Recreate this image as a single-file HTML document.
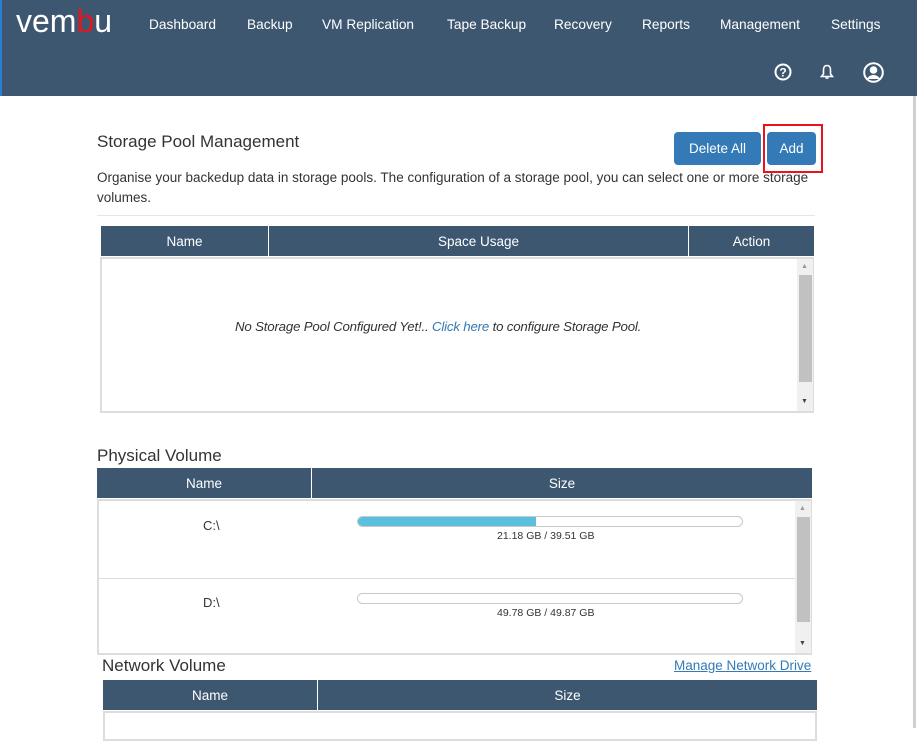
<!DOCTYPE html>
<html><head><meta charset="utf-8"><style>
*{box-sizing:border-box;margin:0;padding:0}
body{width:917px;height:728px;overflow:hidden;background:#fff;font-family:"Liberation Sans",sans-serif;color:#333;position:relative}
.abs{position:absolute}
.hdr{left:0;top:0;width:917px;height:96px;background:#3e5771;border-left:2px solid #2a7fd4}
.nav{color:#fff;font-size:13.7px;top:17px}
.th{background:#3e5771;color:#fff;font-size:13.5px;display:flex;align-items:center;justify-content:center;height:30px}
.sb{background:#f0f0f0}
.thumb{background:#c1c1c1}
.bar{height:11px;border:1px solid #c8c8c8;border-radius:6px;background:#fff;overflow:hidden}
.sm{font-size:10.5px;color:#333}
</style></head><body>
<div class="abs hdr"></div>
<div class="abs" style="left:16px;top:3px;font-size:32px;color:#fff;letter-spacing:0px;font-family:'Liberation Sans',sans-serif">vem<span style="color:#e8141b">b</span>u</div>
<div class="abs nav" style="left:149px">Dashboard</div>
<div class="abs nav" style="left:247px">Backup</div>
<div class="abs nav" style="left:322px">VM Replication</div>
<div class="abs nav" style="left:447px">Tape Backup</div>
<div class="abs nav" style="left:554px">Recovery</div>
<div class="abs nav" style="left:642px">Reports</div>
<div class="abs nav" style="left:720px">Management</div>
<div class="abs nav" style="left:831px">Settings</div>
<svg class="abs" style="left:774px;top:63px" width="18" height="18" viewBox="0 0 18 18"><circle cx="9" cy="9" r="7.5" fill="none" stroke="#fff" stroke-width="2"/><text x="9" y="13.5" font-size="12" font-weight="bold" fill="#fff" text-anchor="middle" font-family="Liberation Sans">?</text></svg>
<svg class="abs" style="left:820px;top:64px" width="14" height="16" viewBox="0 0 14 16"><path d="M7 1.5C4.5 1.5 3.5 3.5 3.5 6v4L1.5 12.5h11L10.5 10V6C10.5 3.5 9.5 1.5 7 1.5z" fill="none" stroke="#fff" stroke-width="1.6"/><path d="M5.5 14h3" stroke="#fff" stroke-width="1.6"/></svg>
<svg class="abs" style="left:863px;top:62px" width="21" height="21" viewBox="0 0 21 21"><circle cx="10.5" cy="10.5" r="9.3" fill="none" stroke="#fff" stroke-width="2"/><circle cx="10.5" cy="8" r="3.8" fill="#fff"/><path d="M4 17c1.5-3 4-4 6.5-4s5 1 6.5 4" fill="#fff"/></svg>
<div class="abs" style="left:913px;top:96px;width:3px;height:632px;background:#d0d0d0"></div>

<div class="abs" style="left:97px;top:132px;font-size:17px;color:#333">Storage Pool Management</div>
<div class="abs" style="left:674px;top:132px;width:87px;height:33px;background:#337ab7;border-radius:4px;color:#fff;font-size:13.5px;display:flex;align-items:center;justify-content:center">Delete All</div>
<div class="abs" style="left:767px;top:132px;width:49px;height:33px;background:#337ab7;border-radius:4px;color:#fff;font-size:13.5px;display:flex;align-items:center;justify-content:center">Add</div>
<div class="abs" style="left:763px;top:124px;width:60px;height:49px;border:2px solid #e8141b"></div>
<div class="abs" style="left:97px;top:168px;width:720px;font-size:13.5px;line-height:20px;color:#333">Organise your backedup data in storage pools. The configuration of a storage pool, you can select one or more storage volumes.</div>
<div class="abs" style="left:97px;top:215px;width:718px;height:1px;background:#e5e5e5"></div>

<div class="abs th" style="left:101px;top:226px;width:167px">Name</div>
<div class="abs th" style="left:269px;top:226px;width:419px">Space Usage</div>
<div class="abs th" style="left:689px;top:226px;width:125px">Action</div>
<div class="abs" style="left:100px;top:257px;width:714px;height:156px;border:2px solid #ddd"></div>
<div class="abs sb" style="left:797px;top:259px;width:16px;height:152px"></div>
<div class="abs thumb" style="left:799px;top:275px;width:13px;height:107px"></div>
<div class="abs" style="left:801px;top:263px;font-size:7px;color:#999">▲</div>
<div class="abs" style="left:801px;top:398px;font-size:7px;color:#444">▼</div>
<div class="abs" style="left:235px;top:319px;font-size:13.3px;font-style:italic;color:#333;letter-spacing:-0.2px">No Storage Pool Configured Yet!.. <span style="color:#337ab7">Click here</span> to configure Storage Pool.</div>

<div class="abs" style="left:97px;top:446px;font-size:17px;color:#333">Physical Volume</div>
<div class="abs th" style="left:97px;top:468px;width:214px">Name</div>
<div class="abs th" style="left:312px;top:468px;width:500px">Size</div>
<div class="abs" style="left:97px;top:499px;width:715px;height:156px;border:2px solid #ddd"></div>
<div class="abs" style="left:99px;top:578px;width:696px;height:1px;background:#ddd"></div>
<div class="abs sb" style="left:795px;top:501px;width:16px;height:152px"></div>
<div class="abs thumb" style="left:797px;top:517px;width:13px;height:105px"></div>
<div class="abs" style="left:799px;top:505px;font-size:7px;color:#999">▲</div>
<div class="abs" style="left:799px;top:640px;font-size:7px;color:#444">▼</div>
<div class="abs" style="left:203px;top:518px;font-size:13px">C:\</div>
<div class="abs" style="left:203px;top:595px;font-size:13px">D:\</div>
<div class="abs bar" style="left:357px;top:516px;width:386px"><div style="width:178px;height:100%;background:#5bc0de"></div></div>
<div class="abs sm" style="left:497px;top:530px">21.18 GB / 39.51 GB</div>
<div class="abs bar" style="left:357px;top:593px;width:386px"></div>
<div class="abs sm" style="left:497px;top:607px">49.78 GB / 49.87 GB</div>

<div class="abs" style="left:102px;top:656px;font-size:17px;color:#333">Network Volume</div>
<div class="abs" style="left:674px;top:658px;font-size:13.5px;color:#337ab7;text-decoration:underline">Manage Network Drive</div>
<div class="abs th" style="left:103px;top:680px;width:214px">Name</div>
<div class="abs th" style="left:318px;top:680px;width:499px">Size</div>
<div class="abs" style="left:103px;top:711px;width:714px;height:30px;border:2px solid #ddd"></div>
</body></html>
